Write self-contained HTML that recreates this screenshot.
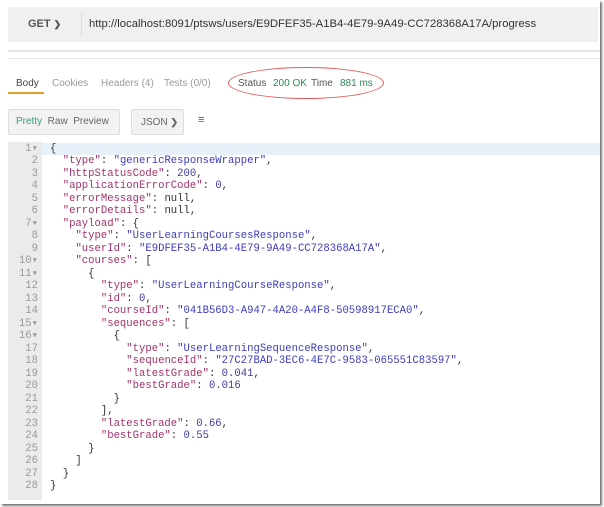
<!DOCTYPE html>
<html><head><style>
*{margin:0;padding:0;box-sizing:border-box}
body{width:604px;height:507px;background:#fff;position:relative;overflow:hidden;font-family:"Liberation Sans",sans-serif}
.frame{position:absolute;left:0;top:0;width:600px;height:504px;background:#fff;box-shadow:2px 2px 2px #777}
.urlbar{position:absolute;left:8px;top:7px;width:590px;height:35px;background:#f0f0f0}
.get{position:absolute;left:28px;top:18px;font-size:11px;color:#555;font-weight:bold}
.sep{position:absolute;left:81px;top:12px;width:1px;height:25px;background:#ddd}
.url{position:absolute;left:89px;top:18px;font-size:11.3px;color:#333}
.hr{position:absolute;left:8px;top:50px;width:592px;height:2px;background:#e4e4e4}
.hr2{position:absolute;left:8px;top:58px;width:592px;height:1px;background:#e8e8e8}
.tab{position:absolute;top:78px;font-size:10px;color:#999}
.ul{position:absolute;left:8px;top:92px;width:36px;height:2px;background:#e0a030}
.ell{position:absolute;left:228px;top:67px;width:156px;height:32px;border:1px solid #e05a5a;border-radius:50%}
.btn{position:absolute;top:109px;height:26px;border:1px solid #ddd;background:#f2f2f2;border-radius:2px;font-size:10px;color:#666;line-height:24px}
.code{position:absolute;left:8px;top:142px;width:592px;height:358px}
.gut{position:absolute;left:0;top:0;width:34px;height:358px;background:#ebebeb}
.hl{position:absolute;left:34px;top:1px;width:558px;height:12px;background:#e8f1fa}
pre{position:absolute;left:0;top:1px;font-family:"Liberation Mono",monospace;font-size:10.6px;line-height:12.48px;color:#333}
.n{display:inline-block;width:30px;text-align:right;color:#999;margin-right:12px}
.k{color:#a3326b}.s{color:#3d3dbd}.d{color:#3d3d9d}
</style></head><body>
<div class="frame"></div>
<div class="urlbar"></div>
<div class="get">GET <span style="font-size:9px">&#10095;</span></div>
<div class="sep"></div>
<div class="url">http://localhost:8091/ptsws/users/E9DFEF35-A1B4-4E79-9A49-CC728368A17A/progress</div>
<div class="hr"></div><div class="hr2"></div>
<div class="tab" style="left:16px;color:#444">Body</div>
<div class="tab" style="left:52px">Cookies</div>
<div class="tab" style="left:101px">Headers (4)</div>
<div class="tab" style="left:164px">Tests (0/0)</div>
<div class="ul"></div>
<div class="ell"></div>
<div class="tab" style="left:238px;color:#555">Status</div>
<div class="tab" style="left:273px;color:#2a8a50">200 OK</div>
<div class="tab" style="left:311px;color:#555">Time</div>
<div class="tab" style="left:340px;color:#2a8a50">881 ms</div>
<div class="btn" style="left:8px;width:112px;padding-left:7px"><span style="color:#3a9a78">Pretty</span>&nbsp; Raw&nbsp; Preview</div>
<div class="btn" style="left:131px;width:53px;padding-left:9px">JSON <b style="font-size:9px">&#10095;</b></div>
<div style="position:absolute;left:198px;top:114px;font-size:11px;color:#555">&#8801;</div>
<div class="code"><div class="gut"></div><div class="hl"></div>
<pre><span class="n">1▾</span>{
<span class="n">2</span>  <span class="k">"type"</span>: <span class="s">"genericResponseWrapper"</span>,
<span class="n">3</span>  <span class="k">"httpStatusCode"</span>: <span class="d">200</span>,
<span class="n">4</span>  <span class="k">"applicationErrorCode"</span>: <span class="d">0</span>,
<span class="n">5</span>  <span class="k">"errorMessage"</span>: null,
<span class="n">6</span>  <span class="k">"errorDetails"</span>: null,
<span class="n">7▾</span>  <span class="k">"payload"</span>: {
<span class="n">8</span>    <span class="k">"type"</span>: <span class="s">"UserLearningCoursesResponse"</span>,
<span class="n">9</span>    <span class="k">"userId"</span>: <span class="s">"E9DFEF35-A1B4-4E79-9A49-CC728368A17A"</span>,
<span class="n">10▾</span>    <span class="k">"courses"</span>: [
<span class="n">11▾</span>      {
<span class="n">12</span>        <span class="k">"type"</span>: <span class="s">"UserLearningCourseResponse"</span>,
<span class="n">13</span>        <span class="k">"id"</span>: <span class="d">0</span>,
<span class="n">14</span>        <span class="k">"courseId"</span>: <span class="s">"041B56D3-A947-4A20-A4F8-50598917ECA0"</span>,
<span class="n">15▾</span>        <span class="k">"sequences"</span>: [
<span class="n">16▾</span>          {
<span class="n">17</span>            <span class="k">"type"</span>: <span class="s">"UserLearningSequenceResponse"</span>,
<span class="n">18</span>            <span class="k">"sequenceId"</span>: <span class="s">"27C27BAD-3EC6-4E7C-9583-065551C83597"</span>,
<span class="n">19</span>            <span class="k">"latestGrade"</span>: <span class="d">0.041</span>,
<span class="n">20</span>            <span class="k">"bestGrade"</span>: <span class="d">0.016</span>
<span class="n">21</span>          }
<span class="n">22</span>        ],
<span class="n">23</span>        <span class="k">"latestGrade"</span>: <span class="d">0.66</span>,
<span class="n">24</span>        <span class="k">"bestGrade"</span>: <span class="d">0.55</span>
<span class="n">25</span>      }
<span class="n">26</span>    ]
<span class="n">27</span>  }
<span class="n">28</span>}</pre></div>
</body></html>
